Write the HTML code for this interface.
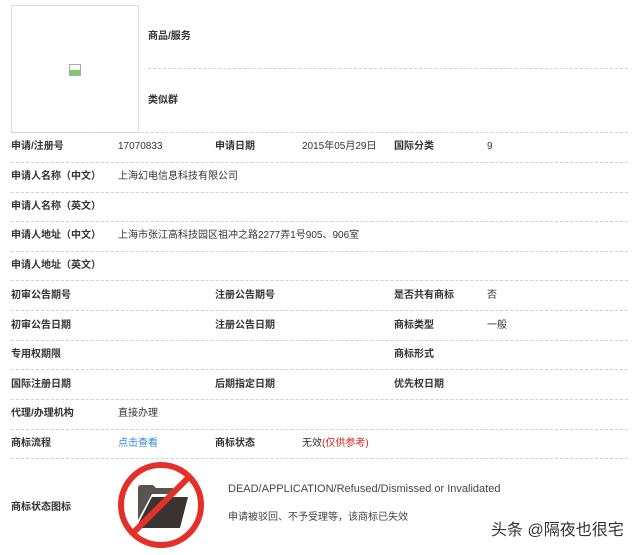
<!DOCTYPE html><html><head><meta charset="utf-8"><style>
body{margin:0;width:640px;height:555px;background:#fff;position:relative;overflow:hidden;font-family:"Liberation Sans","Noto Sans CJK SC",sans-serif;font-size:10px;color:#333}
.a{position:absolute;white-space:nowrap;line-height:12px}
.b{font-weight:bold;color:#333}
.l{position:absolute;left:11px;width:617px;border-top:1px dashed #d0d0d0;height:0}
</style></head><body>
<div style="position:absolute;left:11px;top:5px;width:126px;height:126px;border:1px solid #ddd"></div>
<div style="position:absolute;left:69px;top:64px;width:10px;height:10px;border:1px solid #aaa;background:linear-gradient(#fff 50%,#7c6 50%)"></div>
<div class="a b" style="left:148px;top:31px">商品/服务</div>
<div class="l" style="left:148px;width:480px;top:68px"></div>
<div class="a b" style="left:148px;top:95px">类似群</div>
<div class="l" style="top:132px"></div>
<div class="l" style="top:162px"></div>
<div class="l" style="top:192px"></div>
<div class="l" style="top:221px"></div>
<div class="l" style="top:251px"></div>
<div class="l" style="top:280px"></div>
<div class="l" style="top:310px"></div>
<div class="l" style="top:340px"></div>
<div class="l" style="top:369px"></div>
<div class="l" style="top:399px"></div>
<div class="l" style="top:429px"></div>
<div class="l" style="top:458px"></div>

<div class="a b" style="left:11px;top:141px">申请/注册号</div><div class="a" style="left:118px;top:141px">17070833</div>
<div class="a b" style="left:215px;top:141px">申请日期</div><div class="a" style="left:302px;top:141px">2015年05月29日</div>
<div class="a b" style="left:394px;top:141px">国际分类</div><div class="a" style="left:487px;top:141px">9</div>
<div class="a b" style="left:11px;top:171px">申请人名称（中文）</div><div class="a" style="left:118px;top:171px">上海幻电信息科技有限公司</div>
<div class="a b" style="left:11px;top:201px">申请人名称（英文）</div>
<div class="a b" style="left:11px;top:230px">申请人地址（中文）</div><div class="a" style="left:118px;top:230px">上海市张江高科技园区祖冲之路2277弄1号905、906室</div>
<div class="a b" style="left:11px;top:260px">申请人地址（英文）</div>
<div class="a b" style="left:11px;top:290px">初审公告期号</div><div class="a b" style="left:215px;top:290px">注册公告期号</div><div class="a b" style="left:394px;top:290px">是否共有商标</div><div class="a" style="left:487px;top:290px">否</div>
<div class="a b" style="left:11px;top:320px">初审公告日期</div><div class="a b" style="left:215px;top:320px">注册公告日期</div><div class="a b" style="left:394px;top:320px">商标类型</div><div class="a" style="left:487px;top:320px">一般</div>
<div class="a b" style="left:11px;top:349px">专用权期限</div><div class="a b" style="left:394px;top:349px">商标形式</div>
<div class="a b" style="left:11px;top:379px">国际注册日期</div><div class="a b" style="left:215px;top:379px">后期指定日期</div><div class="a b" style="left:394px;top:379px">优先权日期</div>
<div class="a b" style="left:11px;top:408px">代理/办理机构</div><div class="a" style="left:118px;top:408px">直接办理</div>
<div class="a b" style="left:11px;top:438px">商标流程</div><div class="a" style="left:118px;top:438px;color:#2a8ad8">点击查看</div>
<div class="a b" style="left:215px;top:438px">商标状态</div><div class="a" style="left:302px;top:438px">无效<span style="color:#e02020">(仅供参考)</span></div>
<div class="a b" style="left:11px;top:502px">商标状态图标</div>
<svg style="position:absolute;left:110px;top:455px" width="100" height="100">
<path d="M28 65 V33 q0-3 3-3 h12 l3 3 h17 v6 H42 z" fill="#5a5450"/>
<path d="M42 42 H78 L70 73 H26 z" fill="#3a3431"/>
<circle cx="51" cy="50" r="40" fill="none" stroke="#e5302a" stroke-width="6"/>
<line x1="79" y1="22" x2="23" y2="78" stroke="#e5302a" stroke-width="6"/>
</svg>
<div class="a" style="left:228px;top:483px;font-size:11px;color:#444">DEAD/APPLICATION/Refused/Dismissed or Invalidated</div>
<div class="a" style="left:228px;top:512px;color:#444">申请被驳回、不予受理等，该商标已失效</div>
<div class="a" style="left:491px;top:521px;font-size:16px;line-height:19px;color:#333">头条 @隔夜也很宅</div>
</body></html>
